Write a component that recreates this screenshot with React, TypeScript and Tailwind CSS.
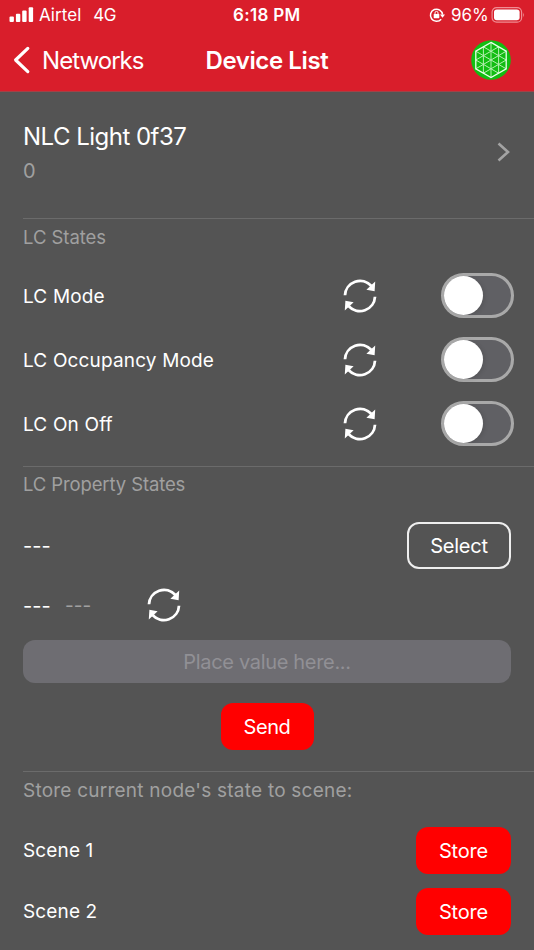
import React from "react";

function RefreshIcon() {
  return (
    <svg width="34" height="36" viewBox="0 0 34 36" fill="none" className="mb-px block shrink-0">
      <path d="M2 17.3A15.1 15.1 0 0 1 28.4 8" stroke="#fff" strokeWidth="2.8" />
      <path d="M32.2 3.5L31.6 13.2L23.4 11.8Z" fill="#fff" />
      <g transform="rotate(180 17 18)">
        <path d="M2 17.3A15.1 15.1 0 0 1 28.4 8" stroke="#fff" strokeWidth="2.8" />
        <path d="M32.2 3.5L31.6 13.2L23.4 11.8Z" fill="#fff" />
      </g>
    </svg>
  );
}

function MeshLogo() {
  return (
    <svg width="40" height="40" viewBox="-20 -20 40 40" fill="none" className="mb-[2px] block">
      <circle r="19.8" fill="#12bd12" />
      <g stroke="#b5efb0" strokeWidth="1">
        <path d="M0-17.6V17.6M-7.6-13.2V13.2M7.6-13.2V13.2" />
        <path d="M-15.2-8.8L15.2 8.8M-15.2 8.8L15.2-8.8" />
        <path d="M-7.6-13.2L15.2 0L-7.6 13.2M7.6-13.2L-15.2 0L7.6 13.2" />
      </g>
      <path d="M0-17.6L15.2-8.8V8.8L0 17.6L-15.2 8.8V-8.8Z" stroke="#eaffea" strokeWidth="1.3" />
    </svg>
  );
}

function StatusBar() {
  return (
    <div className="flex h-[30px] items-center">
      <div className="flex w-[233px] items-center pl-[9px]">
        <svg width="25" height="16" viewBox="0 0 25 16" fill="#fff" className="mb-px block">
          <rect x="0.5" y="9.5" width="4.4" height="5.5" rx="1" />
          <rect x="6.9" y="6.8" width="4.4" height="8.2" rx="1" />
          <rect x="13.2" y="3.6" width="4.4" height="11.4" rx="1" />
          <rect x="19.7" y="0.2" width="4.4" height="14.8" rx="1" />
        </svg>
        <span className="ml-[5px] text-[17px] tracking-[0.05px]">Airtel</span>
        <span className="ml-[12px] text-[17px] tracking-[-0.6px]">4G</span>
      </div>
      <span className="w-[196px] text-[17px] font-semibold tracking-[0.3px]">6:18 PM</span>
      <svg width="16" height="16" viewBox="0 0 16 16" fill="none" className="block">
        <path d="M12.2 12.2A6.1 6.1 0 1 1 13.6 7.6" stroke="#fff" strokeWidth="1.5" />
        <path d="M11 7.4H16L13.5 10.8Z" fill="#fff" />
        <rect x="4.7" y="7" width="5.6" height="4.2" rx="0.6" fill="#fff" />
        <path d="M6 7V5.9A1.5 1.5 0 0 1 9 5.9V7" stroke="#fff" strokeWidth="1" />
      </svg>
      <span className="ml-[6px] w-[40px] whitespace-nowrap text-[17px] tracking-[-0.1px]">96%</span>
      <svg width="36" height="18" viewBox="0 0 36 18" fill="none" className="mb-px block">
        <rect x="1.1" y="1.6" width="29.5" height="14.6" rx="4.5" stroke="#f08d93" strokeWidth="1.2" />
        <rect x="3" y="3.5" width="25.6" height="10.8" rx="2.8" fill="#fff" />
        <path d="M32.2 6.5Q34 9 32.2 11.3Z" fill="#f08d93" />
      </svg>
    </div>
  );
}

function NavBar() {
  return (
    <div className="flex h-[61px] items-center">
      <svg width="18" height="28" viewBox="0 0 18 28" fill="none" className="mb-px ml-[13px] block">
        <path d="M14.8 2.4L2.6 14L14.8 25.6" stroke="#fff" strokeWidth="3.2" strokeLinecap="round" strokeLinejoin="round" />
      </svg>
      <span className="ml-[11px] w-[163px] text-[24px] tracking-[-0.95px]">Networks</span>
      <span className="w-[266px] pl-[0.5px] text-[24px] font-semibold tracking-[-0.4px]">Device List</span>
      <MeshLogo />
    </div>
  );
}

function Toggle() {
  return (
    <div className="flex h-[45px] w-[73px] rounded-full border-[3px] border-[#a9a9a9] bg-[#606064]">
      <div className="size-[39px] rounded-full bg-white shadow-[2px_1px_4px_rgba(0,0,0,0.1)]" />
    </div>
  );
}

function StateRow({ label }: { label: string }) {
  return (
    <div className="flex h-16 items-center">
      <span className="w-[320px] text-[19px] tracking-[0.16px]">{label}</span>
      <RefreshIcon />
      <div className="mb-px ml-[64px]">
        <Toggle />
      </div>
    </div>
  );
}

function StoreRow({ label }: { label: string }) {
  return (
    <div className="mb-[14px] flex h-[47px] items-center justify-between pr-[23px]">
      <span className="text-[19px] tracking-[0.14px]">{label}</span>
      <button className="h-[47px] w-[95px] rounded-xl bg-[#ff0000] text-[20px] tracking-[-0.2px]">Store</button>
    </div>
  );
}

export default function App() {
  return (
    <div className="h-[950px] w-[534px] overflow-hidden bg-[#545454] font-[Inter,'Liberation_Sans',sans-serif] leading-none text-white">
      <header className="h-[92px] border-b border-[#a04348] bg-[#d91e2b]">
        <StatusBar />
        <NavBar />
      </header>
      <main className="pl-[23px]">
        <section className="flex h-[126px] items-center justify-between pr-[23px]">
          <div className="flex h-full flex-col pt-[33px]">
            <span className="text-[24px] tracking-[-0.52px]">NLC Light 0f37</span>
            <span className="mt-[12px] text-[20px] text-[#a0a0a0]">0</span>
          </div>
          <svg width="16" height="22" viewBox="0 0 16 22" fill="none" className="mt-[-6px] block">
            <path d="M3.5 2.5L13 11L3.5 19.5" stroke="#a3a3a3" strokeWidth="2.6" />
          </svg>
        </section>
        <section className="h-[248px] border-t border-[#6b6b6b] pt-[9px]">
          <h2 className="h-[36px] text-[18.5px] tracking-[-0.05px] text-[#a0a0a0]">LC States</h2>
          <StateRow label="LC Mode" />
          <StateRow label="LC Occupancy Mode" />
          <StateRow label="LC On Off" />
        </section>
        <section className="h-[305px] border-t border-[#6b6b6b] pt-[8px] text-[20px]">
          <h2 className="h-[47px] text-[18.5px] tracking-[-0.12px] text-[#a0a0a0]">LC Property States</h2>
          <div className="flex h-[47px] items-center justify-between pr-[23px]">
            <span className="pt-px">---</span>
            <button className="h-[47px] w-[104px] rounded-xl border-2 border-[#eeeeee] tracking-[-0.25px]">Select</button>
          </div>
          <div className="mt-[18px] flex h-[36px] items-center">
            <span className="w-[42px] pt-px">---</span>
            <span className="w-[82px] pt-px text-[19px] text-[#a0a0a0]">---</span>
            <RefreshIcon />
          </div>
          <div className="mr-[23px] mt-[17px] flex h-[43px] items-center justify-center rounded-xl bg-[#6e6d72] tracking-[-0.32px] text-[#919095]">
            Place value here...
          </div>
          <div className="mr-[23px] mt-[20px] flex justify-center">
            <button className="h-[47px] w-[93px] rounded-xl bg-[#ff0000] tracking-[-0.4px]">Send</button>
          </div>
        </section>
        <section className="border-t border-[#6b6b6b] pt-[9px]">
          <h2 className="h-[46px] text-[19px] tracking-[0.23px] text-[#a0a0a0]">Store current node's state to scene:</h2>
          <StoreRow label="Scene 1" />
          <StoreRow label="Scene 2" />
        </section>
      </main>
    </div>
  );
}
